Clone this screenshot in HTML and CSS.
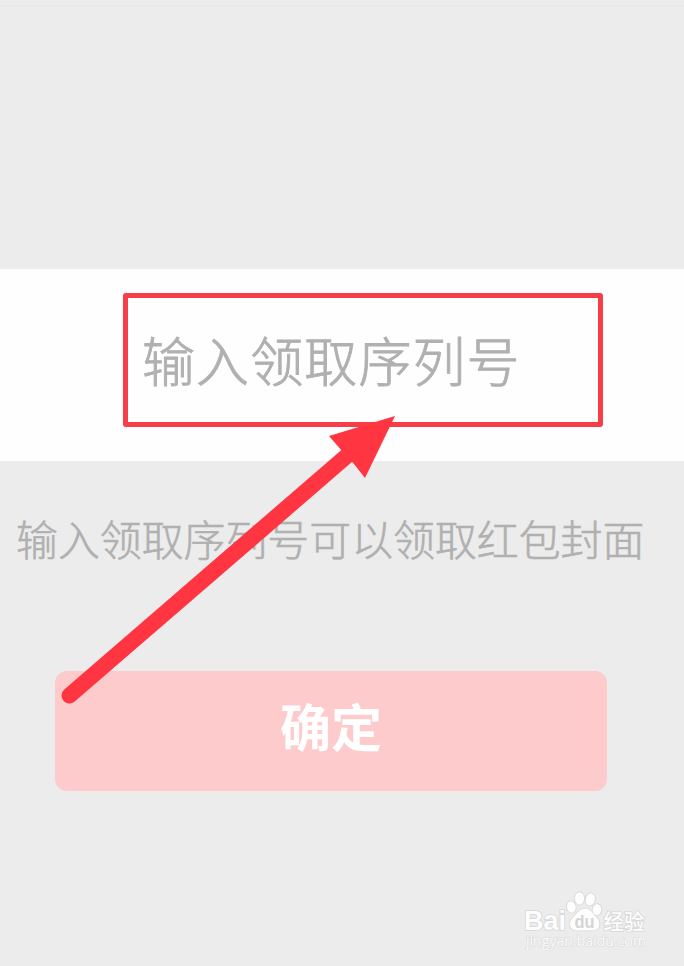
FILE: index.html
```
<!DOCTYPE html>
<html lang="zh-CN">
<head>
    <meta charset="UTF-8">
    <meta name="viewport" content="width=device-width, initial-scale=1.0">
    <title>领取红包封面</title>
    <link rel="stylesheet" href="styles.css">
</head>
<body>
    <div class="main">
        <div class="top"></div>

        <div class="field">
            <div class="frame"><span>输入领取序列号</span></div>
        </div>

        <p class="hint">输入领取序列号可以领取红包封面</p>

        <button class="confirm">确定</button>

        <!-- arrow from the button up to the field -->
        <svg class="arrow" width="684" height="966" viewBox="0 0 684 966">
            <path d="M69.5 695.5 L349 454" />
            <polygon points="395,416 329,436 342,451 354,464 365,478" />
        </svg>

        <div class="watermark">
            <svg width="140" height="66" viewBox="0 0 140 66">
                <g class="mark">
                    <text class="bai" x="2" y="40" textLength="42" lengthAdjust="spacingAndGlyphs">Bai</text>
                    <ellipse cx="49.3" cy="17" rx="4.4" ry="5.8" transform="rotate(-8 49.3 17)" />
                    <ellipse cx="57.5" cy="8.5" rx="4.6" ry="6.2" />
                    <ellipse cx="68.3" cy="9.5" rx="4.6" ry="6.2" transform="rotate(14 68.3 9.5)" />
                    <ellipse cx="75" cy="19.7" rx="4.4" ry="5.6" transform="rotate(8 75 19.7)" />
                    <path d="M63 18.5 C57 18.5 55 24 51 27.5 C45.5 32 47 40.5 55 40.5 L70 40.5 C79 40.5 79 32 74.5 27.5 C71 24 69 18.5 63 18.5 Z" />
                    <text class="jingyan" x="81.5" y="39" textLength="41" lengthAdjust="spacingAndGlyphs">经验</text>
                </g>
                <text class="du" x="52.5" y="37.5" textLength="20" lengthAdjust="spacingAndGlyphs">du</text>
                <text class="url" x="4" y="56" textLength="120" lengthAdjust="spacingAndGlyphs">jingyan.baidu.com</text>
            </svg>
        </div>
    </div>
</body>
</html>
```
FILE: styles.css
```
:root {
    --bg-main: #ececec;
    --text-grey: #b0b0b0;
}

body {
    margin: 0;
    background-color: var(--bg-main);
    font-family: "Noto Sans CJK SC", sans-serif;
}

.main {
    position: relative;
    display: flex;
    flex-direction: column;
    height: 966px;
    overflow: hidden;
}

.top {
    height: 264px;
    margin-top: 5px;
    border-top: 2px solid #e8e8e8;
    box-sizing: border-box;
    flex: none;
}

.field {
    flex: none;
    height: 192px;
    padding: 24px 81px 0 123px;
    box-sizing: border-box;
    background: #fefefe;
}

.frame {
    height: 134px;
    padding-left: 14px;
    box-sizing: border-box;
    border: 5px solid #f83c48;
    border-radius: 3px;

    color: var(--text-grey);
    font-size: 53px;
    font-weight: 300;
    letter-spacing: 1.1px;
    line-height: 123px;
    white-space: nowrap;
    -webkit-text-stroke: 0.9px var(--text-grey);
}

.hint {
    margin: 47px 0 0 16px;
    color: var(--text-grey);
    font-size: 41.9px;
    font-weight: 300;
    line-height: 60px;
    white-space: nowrap;
    -webkit-text-stroke: 0.6px var(--text-grey);
}

.confirm {
    width: 552px;
    height: 120px;
    margin: 103px 0 0 55px;
    padding: 0 0 11px;
    border: 0;
    border-radius: 12px;
    background: #fdcbcc;

    color: #fff;
    font-family: inherit;
    font-size: 51px;
    font-weight: 700;
    line-height: 109px;
}

.arrow {
    position: absolute;
    top: 0;
    left: 0;
}

.arrow path {
    stroke: #ff3641;
    stroke-width: 16;
    stroke-linecap: round;
}

.arrow polygon {
    fill: #ff3641;
}

/* Watermark */
.watermark {
    position: absolute;
    left: 522px;
    top: 890px;
}

.mark {
    fill: #fdfdfd;
    stroke: #d6d6d6;
    stroke-width: 1.6;
    paint-order: stroke;
}

.bai,
.du {
    font-family: "Liberation Sans", sans-serif;
    font-weight: 700;
}

.bai {
    font-size: 27px;
}

.du {
    font-size: 19px;
    fill: #d4d4d4;
}

.jingyan {
    font-size: 21px;
    font-weight: 500;
}

.url {
    font-family: "Open Sans", sans-serif;
    font-size: 14px;
    fill: #fafafa;
    stroke: #dadada;
    stroke-width: 1.2;
    paint-order: stroke;
}
```
